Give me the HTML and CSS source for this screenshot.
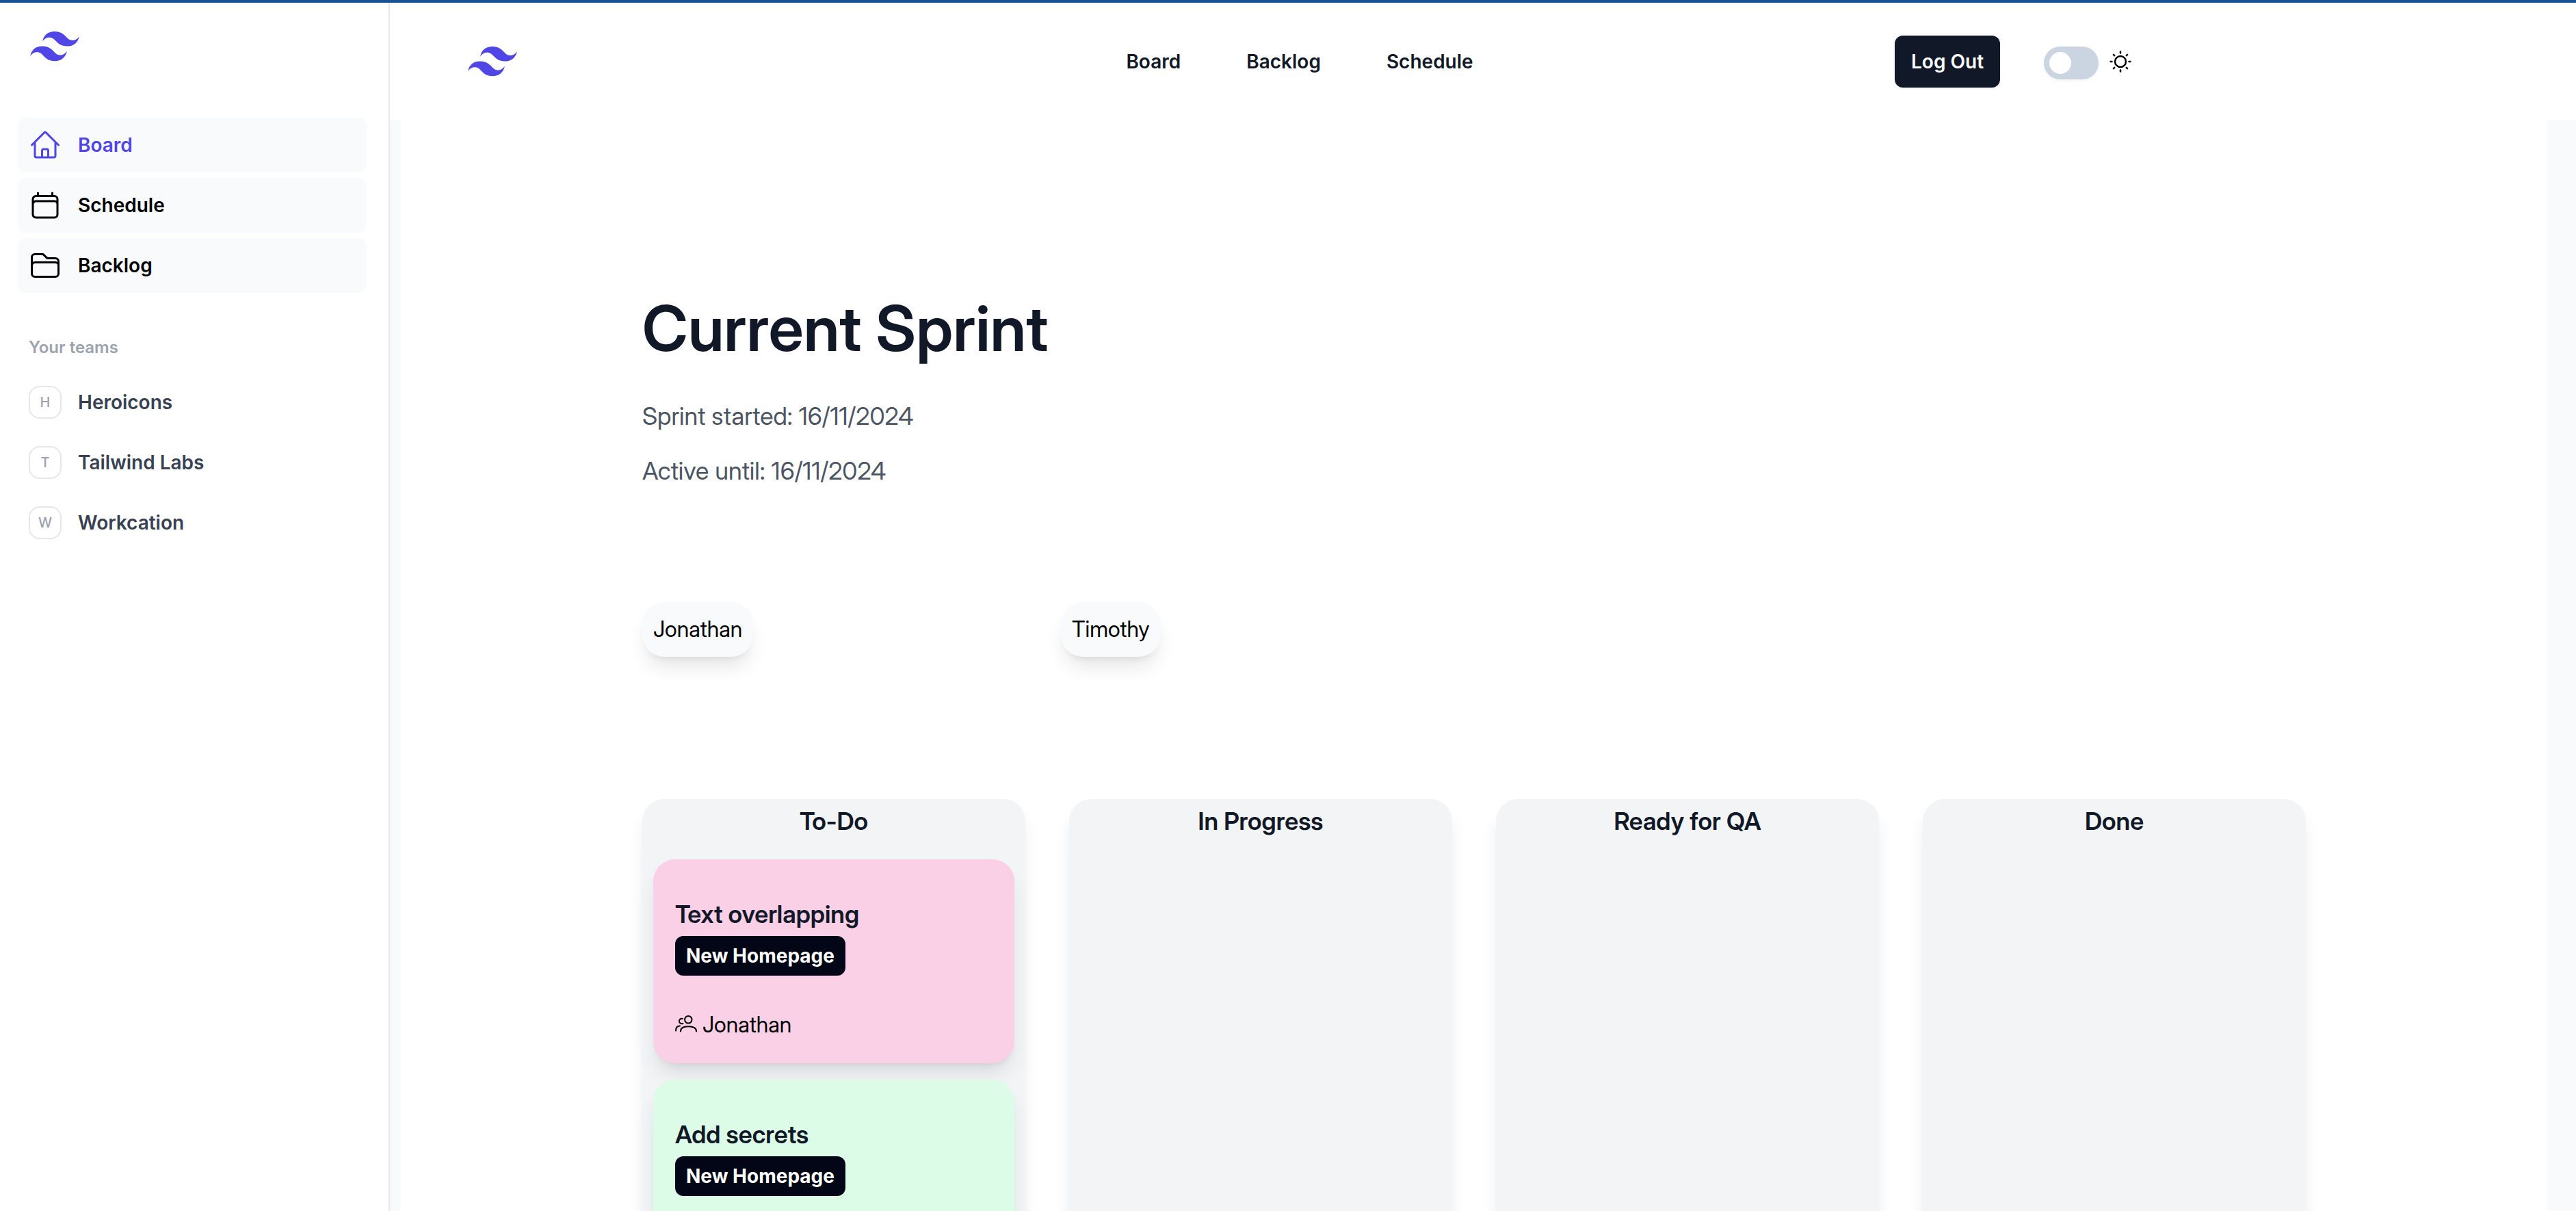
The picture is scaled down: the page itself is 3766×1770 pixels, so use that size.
FILE: index.html
```html
<!DOCTYPE html>
<html lang="en">
<head>
<meta charset="utf-8">
<meta name="viewport" content="width=device-width, initial-scale=1">
<title>Current Sprint</title>
<link rel="stylesheet" href="styles.css">
</head>
<body>
<svg class="sprite" aria-hidden="true">
  <symbol id="mark" viewBox="0 0 54 33"><path fill="currentColor" fill-rule="evenodd" d="M27 0c-7.2 0-11.7 3.6-13.5 10.8 2.7-3.6 5.85-4.95 9.45-4.05 2.054.513 3.522 2.004 5.147 3.653C30.744 13.09 33.808 16.2 40.5 16.2c7.2 0 11.7-3.6 13.5-10.8-2.7 3.6-5.85 4.95-9.45 4.05-2.054-.513-3.522-2.004-5.147-3.653C36.756 3.11 33.692 0 27 0zM13.5 16.2C6.3 16.2 1.8 19.8 0 27c2.7-3.6 5.85-4.95 9.45-4.05 2.054.514 3.522 2.004 5.147 3.653C17.244 29.29 20.308 32.4 27 32.4c7.2 0 11.7-3.6 13.5-10.8-2.7 3.6-5.85 4.95-9.45 4.05-2.054-.513-3.522-2.004-5.147-3.653C23.256 19.31 20.192 16.2 13.5 16.2z"/></symbol>
</svg>
<div class="shell">
  <aside class="sidebar">
    <a href="#" class="brand" aria-label="Home"><svg class="mark"><use href="#mark"/></svg></a>
    <nav class="side-nav" aria-label="Sections">
      <a href="#" class="side-link current">
        <svg class="icon" viewBox="0 0 24 24"><path d="M2.250 12l8.954-8.955c.44-.439 1.152-.439 1.591 0L21.750 12M4.500 9.750v10.125c0 .621.504 1.125 1.125 1.125H9.750v-4.875c0-.621.504-1.125 1.125-1.125h2.250c.621 0 1.125.504 1.125 1.125V21h4.125c.621 0 1.125-.504 1.125-1.125V9.750M8.250 21h8.250"/></svg>
        Board</a>
      <a href="#" class="side-link">
        <svg class="icon" viewBox="0 0 24 24"><path d="M6.750 3v2.250M17.250 3v2.250M3 18.750V7.500a2.250 2.250 0 0 1 2.250-2.250h13.500A2.250 2.250 0 0 1 21 7.500v11.250m-18 0A2.250 2.250 0 0 0 5.250 21h13.500A2.250 2.250 0 0 0 21 18.750m-18 0v-7.500A2.250 2.250 0 0 1 5.250 9h13.500A2.250 2.250 0 0 1 21 11.250v7.500"/></svg>
        Schedule</a>
      <a href="#" class="side-link">
        <svg class="icon" viewBox="0 0 24 24"><path d="M2.250 12.750V12A2.250 2.250 0 0 1 4.500 9.750h15A2.250 2.250 0 0 1 21.750 12v.75m-8.690-6.440l-2.120-2.120a1.500 1.500 0 0 0-1.061-.44H4.500A2.250 2.250 0 0 0 2.250 6v12a2.250 2.250 0 0 0 2.250 2.250h15A2.250 2.250 0 0 0 21.750 18V9a2.250 2.250 0 0 0-2.250-2.250h-5.379a1.500 1.500 0 0 1-1.060-.44z"/></svg>
        Backlog</a>
    </nav>
    <h2 class="teams-title">Your teams</h2>
    <nav class="side-nav" aria-label="Your teams">
      <a href="#" class="side-link team"><span class="initial">H</span>Heroicons</a>
      <a href="#" class="side-link team"><span class="initial">T</span>Tailwind Labs</a>
      <a href="#" class="side-link team"><span class="initial">W</span>Workcation</a>
    </nav>
  </aside>
  <div class="page">
    <header class="topbar">
      <div class="topbar-inner">
        <div class="side-slot"><a href="#" class="brand-top" aria-label="Home"><svg class="mark"><use href="#mark"/></svg></a></div>
        <nav class="top-nav" aria-label="Main">
          <a href="#">Board</a>
          <a href="#">Backlog</a>
          <a href="#">Schedule</a>
        </nav>
        <div class="side-slot actions">
          <button type="button" class="logout">Log Out</button>
          <div class="theme">
            <input type="checkbox" role="switch" class="switch" id="theme" aria-label="Dark mode">
            <label for="theme"><svg class="small-icon" viewBox="0 0 32 32"><circle cx="16" cy="16" r="8"/><path d="M16 1.500v2M16 28.500v2M1.500 16h2M28.500 16h2M5.900 5.900l1.300 1.300M24.800 24.800l1.300 1.300M5.900 26.100l1.300-1.300M24.800 7.200l1.300-1.300"/></svg></label>
          </div>
        </div>
      </div>
    </header>
    <div class="backdrop">
      <main class="content">
        <div class="container">
          <h1>Current Sprint</h1>
          <p class="date">Sprint started: 16/11/2024</p>
          <p class="date">Active until: 16/11/2024</p>
          <ul class="members">
            <li><span class="chip">Jonathan</span></li>
            <li><span class="chip">Timothy</span></li>
          </ul>
          <div class="board">
            <section class="column">
              <h2>To-Do</h2>
              <article class="card pink">
                <h3>Text overlapping</h3>
                <span class="badge">New Homepage</span>
                <p class="assignee"><svg class="small-icon people" viewBox="0 0 32 32"><ellipse cx="19.300" cy="8.300" rx="5.200" ry="5.300"/><path d="M8 25.500c0-5 4-7.200 11.300-7.200s11.700 2.200 11.700 7.200M11.500 14c-7 2-7.500-8.500-.5-7M1 24.500c0-4.500 2-7 6-7"/></svg>Jonathan</p>
              </article>
              <article class="card green">
                <h3>Add secrets</h3>
                <span class="badge">New Homepage</span>
              </article>
            </section>
            <section class="column"><h2>In Progress</h2></section>
            <section class="column"><h2>Ready for QA</h2></section>
            <section class="column"><h2>Done</h2></section>
          </div>
        </div>
      </main>
    </div>
  </div>
</div>
</body>
</html>
```
FILE: styles.css
```css
*, *::before, *::after { box-sizing: border-box; }
body, h1, h2, h3, p, ul { margin: 0; padding: 0; }
body {
  font: 400 32px/48px Inter, "Liberation Sans", sans-serif;
  color: #000;
  background: #fff;
}
a { color: inherit; text-decoration: none; }
ul { list-style: none; }
svg { display: block; flex: none; }
.sprite { display: none; }

.shell {
  display: flex;
  height: 100vh;
  border-top: 4px solid #1a5296;
  overflow: hidden;
}

/* Sidebar */
.sidebar {
  flex: none;
  width: 570px;
  padding: 0 32px 0 26px;
  border-right: 2px solid #e5e7eb;
}
.brand {
  display: flex;
  align-items: center;
  height: 128px;
  padding-left: 18px;
  margin-bottom: 40px;
}
.mark { width: 72px; height: 44px; color: #4f46e5; }
.side-nav { display: flex; flex-direction: column; gap: 8px; }
.side-link {
  display: flex;
  align-items: center;
  gap: 24px;
  padding: 16px;
  border-radius: 12px;
  background: #f9fafb;
  font-size: 28px;
  font-weight: 600;
}
.side-link.current { color: #4f46e5; }
.side-link.team { background: none; color: #374151; }
.icon {
  width: 48px;
  height: 48px;
  fill: none;
  stroke: currentColor;
  stroke-width: 1.5;
  stroke-linecap: round;
  stroke-linejoin: round;
}
.teams-title {
  margin: 56px 0 16px 16px;
  font-size: 24px;
  font-weight: 600;
  color: #9ca3af;
}
.initial {
  display: flex;
  align-items: center;
  justify-content: center;
  width: 48px;
  height: 48px;
  border: 2px solid #e5e7eb;
  border-radius: 16px;
  background: #fff;
  font-size: 20px;
  font-weight: 500;
  color: #9ca3af;
}

/* Header */
.page { flex: 1; min-width: 0; display: flex; flex-direction: column; }
.topbar { flex: none; padding-left: 50px; }
.topbar-inner {
  display: flex;
  align-items: center;
  max-width: 2560px;
  padding: 48px 64px;
}
.side-slot { flex: 1; display: flex; }
.top-nav { display: flex; gap: 96px; font-size: 28px; font-weight: 600; color: #111827; }
.actions { justify-content: flex-end; align-items: center; gap: 64px; }
.logout {
  height: 76px;
  padding: 0 24px;
  border: 0;
  border-radius: 12px;
  background: #111827;
  box-shadow: 0 2px 4px rgba(0, 0, 0, .05);
  color: #fff;
  font: 600 28px/48px Inter, "Liberation Sans", sans-serif;
}
.theme { display: flex; align-items: center; gap: 16px; }
.switch {
  appearance: none;
  display: flex;
  width: 80px;
  height: 48px;
  margin: 4px 0 0;
  padding: 8px;
  border-radius: 24px;
  background: #cbd5e1;
  box-shadow: 0 2px 4px rgba(0, 0, 0, .05);
}
.switch::before { content: ""; width: 32px; height: 32px; border-radius: 50%; background: #fff; }
.switch:checked { justify-content: flex-end; background: #111827; }
.small-icon {
  width: 32px;
  height: 32px;
  fill: none;
  stroke: #000;
  stroke-width: 2.5;
  stroke-linecap: round;
}
.people { stroke-width: 2; }

/* Sprint board */
.backdrop { flex: 1; min-height: 0; display: flex; padding: 0 42px 0 16px; background: #f9fafb; }
.content {
  flex: 1;
  min-width: 0;
  overflow-y: auto;
  scrollbar-width: none;
  background: #fff;
  font-family: "Inter Display", Inter, "Liberation Sans", sans-serif;
}
.container { max-width: 2560px; margin: 0 auto; padding: 256px 64px 128px; }
.content h1, .content h2, .content h3 { font-weight: 600; color: #111827; }
.content h1 { margin-bottom: 48px; font-size: 92px; line-height: 96px; }
.date { margin-bottom: 16px; font-size: 36px; line-height: 64px; color: #4b5563; }
.members { display: grid; grid-template-columns: repeat(4, 1fr); gap: 16px; margin: 160px 0 208px; }
.chip {
  display: inline-block;
  padding: 16px;
  border-radius: 32px;
  background: #f9fafb;
  box-shadow: 0 20px 30px -6px rgba(0, 0, 0, .1), 0 8px 12px -8px rgba(0, 0, 0, .1);
  vertical-align: top;
}
.board { display: grid; grid-template-columns: repeat(4, 1fr); gap: 64px; }
.column {
  display: flex;
  flex-direction: column;
  gap: 24px;
  min-height: 1200px;
  padding: 0 16px 16px;
  border-radius: 32px;
  background: #f3f4f6;
  box-shadow: 0 20px 30px -6px rgba(0, 0, 0, .1), 0 8px 12px -8px rgba(0, 0, 0, .1);
}
.column h2, .card h3 { font-size: 36px; line-height: 64px; }
.column h2 { text-align: center; }
.card {
  display: flex;
  flex-direction: column;
  align-items: flex-start;
  padding: 48px 32px 32px;
  border-radius: 32px;
  box-shadow: 0 20px 30px -6px rgba(0, 0, 0, .1), 0 8px 12px -8px rgba(0, 0, 0, .1);
}
.pink { background: #f9d0e6; }
.green { background: #dcfce7; }
.badge {
  padding: 5px 16px;
  margin-bottom: 48px;
  border-radius: 12px;
  background: #020617;
  color: #fff;
  font-family: Inter, "Liberation Sans", sans-serif;
  font-size: 28px;
  font-weight: 700;
}
.assignee { display: flex; align-items: center; gap: 8px; }
```
